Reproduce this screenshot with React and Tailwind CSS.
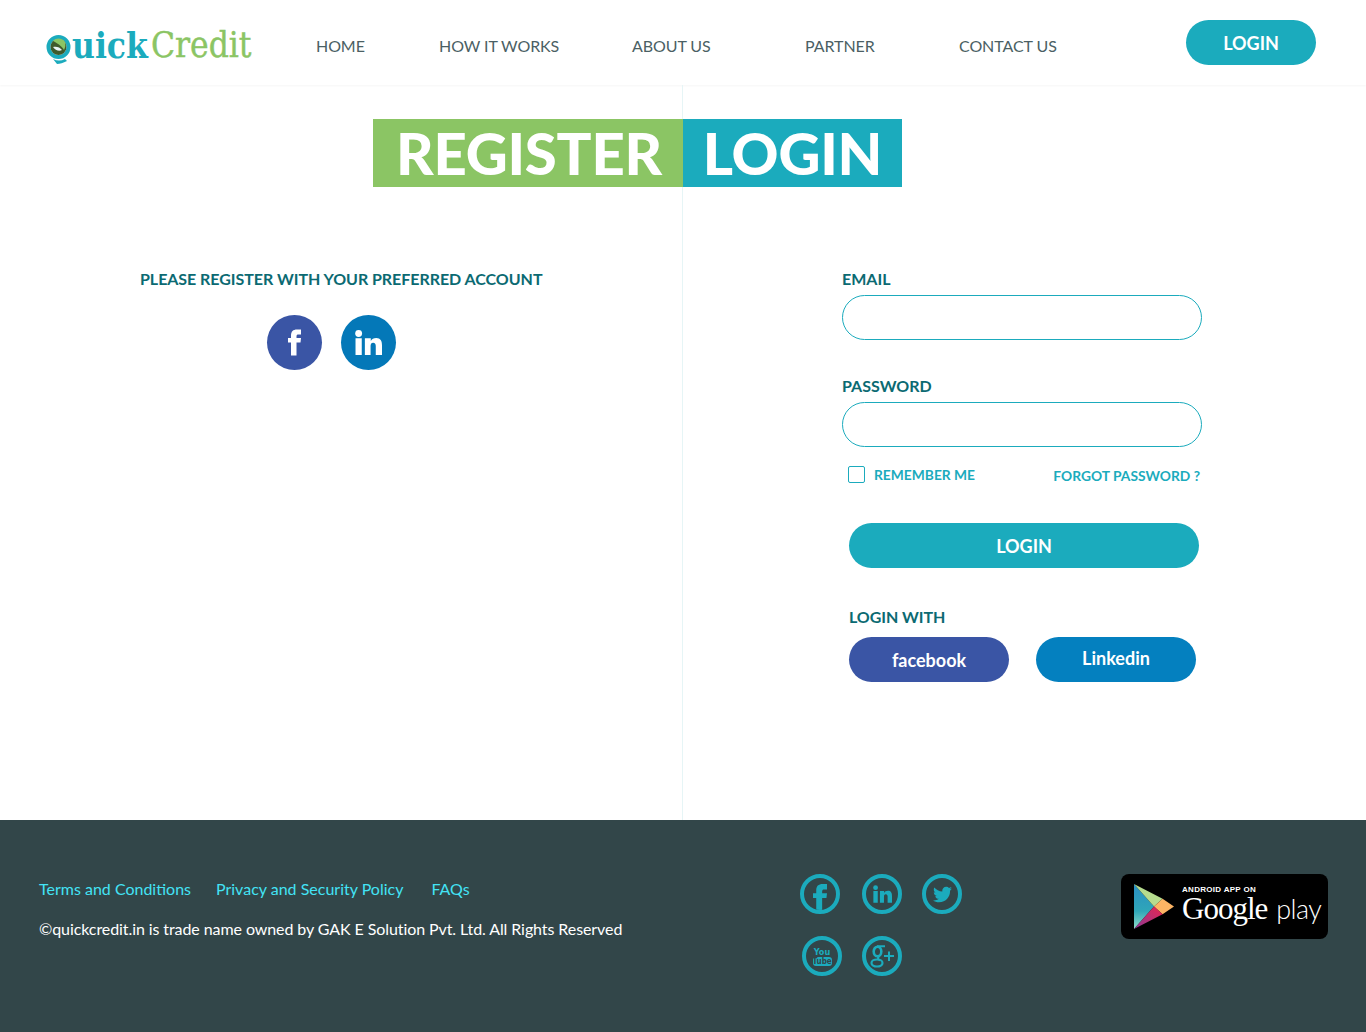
import { FaTwitter } from "react-icons/fa";

const navItems = [
  { label: "HOME", width: "w-[123px]" },
  { label: "HOW IT WORKS", width: "w-[193px]" },
  { label: "ABOUT US", width: "w-[173px]" },
  { label: "PARTNER", width: "w-[154px]" },
  { label: "CONTACT US", width: "w-[120px]" },
];

const FIcon = ({ width, height, className = "" }) => (
  <svg width={width} height={height} viewBox="0 0 13 26" fill="currentColor" className={className}>
    <path d="M3 26V13H0V8.500h3V6C3 2 5 0 9 0h4v5h-2.500C9 5 8.500 5.500 8.500 7v1.500H13l-.5 4.500H8.500v13z" />
  </svg>
);

const InIcon = ({ width, height }) => (
  <svg width={width} height={height} viewBox="0 0 26 24" fill="currentColor">
    <circle cx="3.500" cy="3.300" r="3.300" />
    <path d="M.500 8h6v16h-6zM9.500 8h5.700v2.500C16 9 18 7.700 20.500 7.700c4 0 5.500 2.800 5.500 7V24h-6v-8.500c0-2-.7-3.300-2.500-3.300-2 0-2.500 1.500-2.500 3.500V24H9.500z" />
  </svg>
);

const GPlusIcon = () => (
  <svg width="25" height="23" viewBox="0 0 25 23" fill="none" stroke="currentColor" className="ml-[1px]">
    <ellipse cx="7.500" cy="6.500" rx="3.800" ry="4.800" strokeWidth="2.600" />
    <ellipse cx="7" cy="18" rx="5.500" ry="3.500" strokeWidth="2.200" />
    <path d="M7 1.300h8M9 11.500c-2 1.500-1 2.500 1 4" strokeWidth="2" />
    <path d="M14 11h10M19 6.500v9.500" strokeWidth="2" />
  </svg>
);

const Ring = ({ children, className = "" }) => (
  <a className={`flex h-10 w-10 items-center justify-center overflow-hidden rounded-full border-4 border-[#1babbd] text-[#1babbd] ${className}`}>
    {children}
  </a>
);

const Logo = () => (
  <div className="flex items-center font-['DejaVu_Serif_Condensed','DejaVu_Serif',serif] text-[35px] leading-none">
    <svg width="30" height="36" viewBox="0 0 30 36" className="mt-[10px]">
      <circle cx="13.500" cy="15" r="10" fill="none" stroke="#1babbd" strokeWidth="4" />
      <circle cx="13.500" cy="15" r="8" fill="#3f5a2c" />
      <path d="M8 9c3-4 10-3 12 1 1 3 0 6-1 8-2-4-7-7-11-9z" fill="#8bc564" />
      <path d="M8 15c3-1 7 0 9 3-3 2-7 0-9-3z" fill="#e8f3f5" />
      <path d="M8 27c4 2 8 2 12 0l2 2c-4 2-7 3-10 3z" fill="#1babbd" />
    </svg>
    <span className="-ml-[3px] font-bold text-[#1babbd]">uick</span>
    <span className="ml-[3px] text-[#8bc564] [-webkit-text-stroke:0.4px_#8bc564]">Credit</span>
  </div>
);

const GooglePlay = () => (
  <div className="flex h-[65px] w-[207px] items-center rounded-lg bg-black pl-[13px] text-white">
    <svg width="40" height="47" viewBox="0 0 42 48" preserveAspectRatio="none">
      <defs>
        <linearGradient id="playLeft" x1="0" y1="0" x2="0" y2="1">
          <stop offset="0" stopColor="#2a8fc4" />
          <stop offset="0.6" stopColor="#2fa6b8" />
          <stop offset="1" stopColor="#8fdcc8" />
        </linearGradient>
        <linearGradient id="playBottom" x1="1" y1="0" x2="0" y2="1">
          <stop offset="0" stopColor="#e8244f" />
          <stop offset="1" stopColor="#8a3a96" />
        </linearGradient>
      </defs>
      <path d="M0 1v46l21-23z" fill="url(#playLeft)" />
      <path d="M0 1l21 23 9-8z" fill="#b6dc8e" />
      <path d="M30 16l-9 8 9 8 12-8z" fill="#fdb464" />
      <path d="M0 47l30-15-9-8z" fill="url(#playBottom)" />
    </svg>
    <div className="mb-[3px] ml-[8px] flex flex-col">
      <span className="font-['Liberation_Sans',sans-serif] text-[8px] font-bold leading-[8px] tracking-[0.3px]">ANDROID APP ON</span>
      <span className="font-['Liberation_Serif',serif] text-[31px] leading-[30px] tracking-[-1px]">
        Google<span className="ml-[9px] font-['Lato',sans-serif] text-[27px] font-light tracking-[-0.6px]">play</span>
      </span>
    </div>
  </div>
);

const App = () => {
  return (
    <div className="flex min-h-[1032px] flex-col bg-white font-['Lato',sans-serif]">
      {/* Header */}
      <header className="flex h-[85px] items-start shadow-[0_1px_2px_rgba(0,0,0,0.04)]">
        <div className="ml-[45px] mt-[22px] w-[271px]">
          <Logo />
        </div>
        <nav className="mt-[36px] flex text-base leading-5 tracking-[-0.08px] text-[#4b5f64]">
          {navItems.map((item) => (
            <a key={item.label} className={item.width}>{item.label}</a>
          ))}
        </nav>
        <button className="ml-[107px] mt-[20px] h-[45px] w-[130px] rounded-[23px] bg-[#1babbd] text-lg font-bold leading-none text-white">
          LOGIN
        </button>
      </header>

      {/* Register / login */}
      <main className="grid h-[735px] grid-cols-2">
        <section className="border-r border-[#e6f5f6] pt-[34px]">
          <div className="-mr-px flex justify-end">
            <h1 className="h-[68px] w-[310px] bg-[#8bc564] pl-[2px] text-center text-[58px] font-black leading-[68px] tracking-[-0.2px] text-white">
              REGISTER
            </h1>
          </div>
          <p className="ml-[140px] mt-[82px] text-base font-bold leading-5 tracking-[-0.04px] text-[#0b6a72]">
            PLEASE REGISTER WITH YOUR PREFERRED ACCOUNT
          </p>
          <div className="ml-[267px] mt-[26px] flex gap-[19px]">
            <a className="flex h-[55px] w-[55px] items-center justify-center rounded-full bg-[#3a55a5] text-white">
              <FIcon width={13} height={27} />
            </a>
            <a className="flex h-[55px] w-[55px] items-center justify-center rounded-full bg-[#0478b8] text-white">
              <InIcon width={27} height={25} />
            </a>
          </div>
        </section>

        <section className="pt-[34px]">
          <h1 className="h-[68px] w-[219px] bg-[#1babbd] text-center text-[58px] font-black leading-[68px] tracking-[-0.2px] text-white">
            LOGIN
          </h1>
          <div className="ml-[159px] mt-[82px] w-[360px]">
            <label className="block text-base font-bold leading-5 text-[#0b6a72]">EMAIL</label>
            <input className="mt-[6px] block h-[45px] w-full rounded-[23px] border border-[#1babbd] bg-white" />
            <label className="mt-[36px] block text-base font-bold leading-5 text-[#0b6a72]">PASSWORD</label>
            <input type="password" className="mt-[6px] block h-[45px] w-full rounded-[23px] border border-[#1babbd] bg-white" />

            <div className="mt-[17px] flex items-center text-[13.8px] font-bold text-[#1babbd]">
              <span className="mb-[2px] ml-[6px] h-[17px] w-[17px] rounded-[2px] border border-[#1babbd]" />
              <span className="ml-[9px] leading-5">REMEMBER ME</span>
              <a className="ml-auto mr-[2px] mt-[2px] leading-5">FORGOT PASSWORD ?</a>
            </div>

            <button className="ml-[7px] mt-[37px] block h-[45px] w-[350px] rounded-[23px] bg-[#1babbd] text-lg font-bold leading-none text-white">
              LOGIN
            </button>

            <p className="ml-[7px] mt-[39px] text-base font-bold leading-5 tracking-[-0.05px] text-[#0b6a72]">LOGIN WITH</p>
            <div className="ml-[7px] mt-[10px] flex gap-[27px] text-lg font-bold leading-none text-white">
              <button className="h-[45px] w-[160px] rounded-[23px] bg-[#3a55a5]">facebook</button>
              <button className="h-[45px] w-[160px] rounded-[23px] bg-[#0480bf] pb-[3px]">Linkedin</button>
            </div>
          </div>
        </section>
      </main>

      {/* Footer */}
      <footer className="flex h-[212px] bg-[#324649]">
        <div className="ml-[39px] mt-[59px] w-[761px]">
          <div className="flex text-base leading-5 text-[#43e3f5]">
            <a>Terms and Conditions</a>
            <a className="ml-[25px]">Privacy and Security Policy</a>
            <a className="ml-[28px]">FAQs</a>
          </div>
          <p className="mt-[20px] text-base leading-5 tracking-[-0.085px] text-white">
            ©quickcredit.in is trade name owned by GAK E Solution Pvt. Ltd. All Rights Reserved
          </p>
        </div>
        <div className="mt-[54px] w-[321px]">
          <div className="flex">
            <Ring>
              <FIcon width={14} height={28} className="mt-[7px]" />
            </Ring>
            <Ring className="ml-[22px]">
              <InIcon width={19} height={18} />
            </Ring>
            <Ring className="ml-[20px]">
              <FaTwitter size={19} />
            </Ring>
          </div>
          <div className="mt-[22px] flex">
            <Ring className="ml-[2px] flex-col">
              <span className="font-['DejaVu_Sans_Condensed','Liberation_Sans',sans-serif] text-[9px] font-bold leading-[10px]">You</span>
              <span className="w-[19px] rounded-[3px] bg-[#1babbd] text-center font-['DejaVu_Sans_Condensed','Liberation_Sans',sans-serif] text-[8px] font-bold leading-[9px] text-[#324649]">Tube</span>
            </Ring>
            <Ring className="ml-[20px]">
              <GPlusIcon />
            </Ring>
          </div>
        </div>
        <div className="mt-[54px]">
          <GooglePlay />
        </div>
      </footer>
    </div>
  );
};

export default App;
